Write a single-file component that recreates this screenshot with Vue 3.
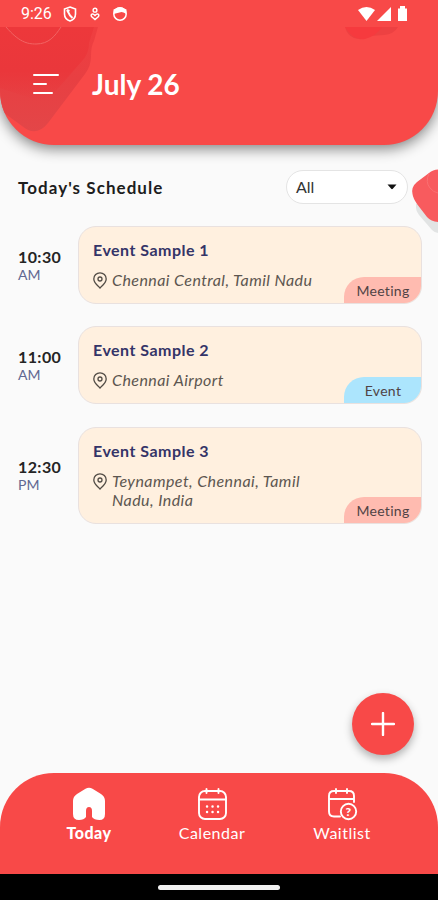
<script setup>
const events = [
  { time: '10:30', half: 'AM', title: 'Event Sample 1', place: ['Chennai Central, Tamil Nadu'], type: 'Meeting' },
  { time: '11:00', half: 'AM', title: 'Event Sample 2', place: ['Chennai Airport'], type: 'Event' },
  { time: '12:30', half: 'PM', title: 'Event Sample 3', place: ['Teynampet, Chennai, Tamil', 'Nadu, India'], type: 'Meeting' },
]
</script>

<template>
  <div class="screen">
    <header class="header">
      <svg class="header-art" width="438" height="145" viewBox="0 0 438 145">
        <defs>
          <linearGradient id="shade" x1="0" y1="0" x2="0" y2="1">
            <stop offset="0" stop-color="#f03e40" />
            <stop offset="0.5" stop-color="#e83f42" />
            <stop offset="1" stop-color="#e34648" />
          </linearGradient>
          <linearGradient id="fade" x1="0" y1="0" x2="0" y2="1">
            <stop offset="0" stop-color="#ed383b" />
            <stop offset="0.6" stop-color="#ea373b" />
            <stop offset="1" stop-color="#e8373b" stop-opacity="0" />
          </linearGradient>
        </defs>
        <path d="M0 27H98L94 41Q91 46 91 57Q91 66 85 74L48 123Q36 138 22 126L0 110Z" fill="url(#shade)" />
        <path d="M0 27H94L89 43Q89 54 82 61L54 93Q45 103 30 98L0 88Z" fill="url(#fade)" />
        <path d="M6 27C19 42 27 44 36 44C49 44 55 36 61 27" fill="none" stroke="#f26463" stroke-width="1" />
        <path d="M345 27H398Q394 34 384 35L370 36Q363 41 354 38Q347 35 345 27Z" fill="#ed4142" />
        <path d="M345 27H382Q376 36 365 39Q353 41 345 27Z" fill="#f63a3e" />
      </svg>
      <div class="status">
        <span class="clock">9:26</span>
        <svg class="shield" width="14" height="16" viewBox="0 0 14 16" fill="none" stroke="#fff" stroke-width="1.6">
          <path d="M7 1L12.500 3V8C12.500 11.500 10 14 7 15C4 14 1.500 11.500 1.500 8V3Z" />
          <path d="M4 4L7 9.500L9.500 12M4 4L6.500 5" stroke-width="2" />
        </svg>
        <svg class="person" width="10" height="14" viewBox="0 0 10 14" fill="none" stroke="#fff" stroke-width="1.400">
          <circle cx="5" cy="3.200" r="1.900" />
          <path d="M5 8.500C2.500 5.500 0.500 7.500 1.500 9.500L5 12.500L8.500 9.500C9.500 7.500 7.500 5.500 5 8.500Z" />
        </svg>
        <svg class="face" width="16" height="16" viewBox="0 0 16 16">
          <circle cx="8" cy="8" r="6.200" fill="none" stroke="#fff" stroke-width="1.500" />
          <path d="M1.500 8V3.500L4 2.500Q8 0 12 2.500L14.500 3.500V8L11.500 6.500L9.500 6L5.500 7Z" fill="#fff" />
        </svg>
        <svg class="signals" width="51" height="16" viewBox="0 0 51 16" fill="#fff">
          <path d="M0 4Q8.500-2 17 4L8.500 15Z" />
          <path d="M33 1V15H19Z" />
          <path d="M40 2.500H42V0H47V2.500H49V15H40Z" />
        </svg>
      </div>
      <div class="title-row">
        <svg class="menu" width="28" height="22" viewBox="0 0 28 22" fill="none" stroke="#fff" stroke-width="2" stroke-linecap="round">
          <path d="M2 2H26M2 11H14M2 20H20" />
        </svg>
        <h1>July 26</h1>
      </div>
    </header>

    <main class="main">
      <svg class="side-art" width="28" height="74" viewBox="0 0 28 74">
        <path d="M6 40V44Q6 47 9 51L22 66Q25 69 28 69V40Z" fill="#e2e4e4" />
        <path d="M28 5.500Q23 5.500 19 9L7 18Q1 23 2.500 30Q3 34 7 40L17 53Q21 57.500 28 58Z" fill="#f85b5e" />
        <path d="M19 9.500Q15 18 20 24Q23 28 28 29" fill="none" stroke="#fa7072" stroke-width="1" />
      </svg>
      <div class="section-head">
        <h2>Today's Schedule</h2>
        <div class="select">
          <span>All</span>
          <svg width="10" height="6" viewBox="0 0 10 6"><path d="M0.500 0.500H9.500L5.800 4.800Q5 5.600 4.200 4.800Z" fill="#111" /></svg>
        </div>
      </div>
      <section class="list">
        <article v-for="event in events" :key="event.time" class="row">
          <div class="time">
            <strong>{{ event.time }}</strong>
            <span>{{ event.half }}</span>
          </div>
          <div class="card">
            <h3>{{ event.title }}</h3>
            <div class="place">
              <svg width="14" height="17" viewBox="0 0 14 17" fill="none" stroke="#514b45" stroke-width="1.300">
                <path d="M7 16C5.500 14.200 0.800 11 0.800 6.900A6.200 6.100 0 0 1 13.200 6.900C13.200 11 8.500 14.200 7 16Z" />
                <circle cx="7" cy="7" r="2" />
              </svg>
              <p><span v-for="line in event.place" :key="line">{{ line }}</span></p>
            </div>
            <span class="tag" :class="event.type.toLowerCase()">{{ event.type }}</span>
          </div>
        </article>
      </section>
      <button class="fab" aria-label="Add">
        <svg width="24" height="24" viewBox="0 0 24 24" stroke="#fff" stroke-width="2.400" stroke-linecap="round"><path d="M12 1V23M1 12H23" /></svg>
      </button>
    </main>

    <nav class="nav">
      <div class="tab active">
        <svg width="34" height="34" viewBox="0 0 34 34">
          <path d="M13.500 1.800Q17 -0.500 20.500 1.800L29 7Q33 9.500 33 14V27Q33 33 27.500 33Q22 33 20 30V24Q20 20 17 20Q14 20 14 24V30Q12 33 7 33Q1 33 1 27V14Q1 9.500 5 7Z" fill="#fff" />
        </svg>
        <span>Today</span>
      </div>
      <div class="tab">
        <svg width="32" height="34" viewBox="0 0 32 34" fill="none" stroke="#fff" stroke-width="1.900" stroke-linecap="round">
          <rect x="3" y="4" width="27" height="28" rx="6" />
          <path d="M3 12.500H30M10.500 2V6M22.500 2V6" />
          <path d="M11 19.500H11.100M16.500 19.500H16.600M22 19.500H22.100M11 25H11.100M16.500 25H16.600M22 25H22.100" stroke-width="2.400" />
        </svg>
        <span>Calendar</span>
      </div>
      <div class="tab">
        <svg width="32" height="34" viewBox="0 0 32 34" fill="none" stroke="#fff" stroke-width="1.900" stroke-linecap="round">
          <path d="M14 29.500H8Q3 29.500 3 24.500V9Q3 4 8 4H23Q28 4 28 9V15M3 12H28M10 2V6M21 2V6" />
          <circle cx="22.500" cy="24.500" r="7.700" />
          <text x="22.500" y="28.700" text-anchor="middle" font-family="Lato, sans-serif" font-size="12" font-weight="900" fill="#fff" stroke="none">?</text>
        </svg>
        <span>Waitlist</span>
      </div>
    </nav>
    <div class="system-bar"><i></i></div>
  </div>
</template>

<style>
body {
  margin: 0;
}
</style>

<style scoped>
.screen {
  width: 438px;
  height: 900px;
  display: flex;
  flex-direction: column;
  overflow: hidden;
  background: #fafafa;
  color: #222;
  font-family: Lato, "Open Sans", sans-serif;
}
h1, h2, h3, p {
  margin: 0;
}
svg {
  display: block;
  flex: none;
}
.header {
  position: relative;
  flex: none;
  height: 145px;
  border-radius: 0 0 54px 54px;
  background: #f84948;
  box-shadow: 0 4px 14px rgba(0, 0, 0, 0.48);
}
.header-art {
  position: absolute;
  inset: 0;
  border-radius: 0 0 54px 54px;
}
.status {
  position: relative;
  display: flex;
  align-items: center;
  height: 28px;
  padding: 0 29px 0 21px;
  color: #fff;
}
.clock {
  width: 42px;
  font: 16px/20px Roboto, sans-serif;
}
.person {
  margin-left: 13px;
}
.face {
  margin-left: 12px;
}
.signals {
  margin-left: auto;
}
.title-row {
  position: relative;
  display: flex;
  align-items: center;
  height: 48px;
  margin-top: 32px;
  padding-left: 32px;
  gap: 32px;
}
h1 {
  color: #fff;
  font-size: 28px;
  font-weight: 700;
  line-height: 36px;
}
.main {
  position: relative;
  flex: 1;
}
.side-art {
  position: absolute;
  right: 0;
  top: 19px;
}
.section-head {
  display: flex;
  align-items: center;
  justify-content: space-between;
  padding: 25px 30px 0 18px;
}
h2 {
  color: #1d1d1d;
  font-size: 17px;
  font-weight: 700;
  letter-spacing: 1.05px;
}
.select {
  box-sizing: border-box;
  display: flex;
  align-items: center;
  justify-content: space-between;
  width: 122px;
  height: 34px;
  padding: 0 10px 0 9px;
  border: 1px solid #e4e4e4;
  border-radius: 17px;
  background: #fff;
  color: #333;
  font-size: 16px;
}
.select span {
  margin-top: -2px;
}
.list {
  display: flex;
  flex-direction: column;
  gap: 22.3px;
  padding: 22px 16px 0 18px;
}
.row {
  display: flex;
  align-items: center;
}
.time {
  display: flex;
  flex-direction: column;
  width: 60px;
}
.time strong {
  color: #242424;
  font-size: 16px;
  font-weight: 700;
  line-height: 18px;
  letter-spacing: 0.4px;
}
.time span {
  color: #616891;
  font-size: 14px;
  line-height: 17px;
}
.card {
  position: relative;
  box-sizing: border-box;
  flex: 1;
  padding: 13px 14px 14px;
  border: 1px solid #e9e1df;
  border-radius: 18px;
  background: #fff0df;
  overflow: hidden;
}
h3 {
  color: #343468;
  font-size: 16px;
  font-weight: 700;
  line-height: 20px;
  letter-spacing: 0.48px;
}
.place {
  display: flex;
  gap: 5px;
  margin-top: 10px;
}
.place svg {
  margin-top: 2px;
}
.place p {
  display: flex;
  flex-direction: column;
  color: #5c5650;
  font-size: 16px;
  font-style: italic;
  line-height: 19px;
  letter-spacing: 0.43px;
}
.tag {
  position: absolute;
  right: -1px;
  bottom: -1px;
  box-sizing: border-box;
  width: 78px;
  height: 27px;
  border-radius: 20px 0 10px 0;
  color: #504345;
  font-size: 14px;
  line-height: 28px;
  letter-spacing: 0.3px;
  text-align: center;
}
.meeting {
  background: #ffbbb0;
}
.event {
  background: #ace5fd;
}
.fab {
  position: absolute;
  right: 24px;
  bottom: 18px;
  display: grid;
  place-items: center;
  width: 62px;
  height: 62px;
  padding: 0;
  border: 0;
  border-radius: 50%;
  background: #f84948;
  box-shadow: 0 4px 8px rgba(0, 0, 0, 0.3);
}
.nav {
  box-sizing: border-box;
  display: grid;
  grid-template-columns: 90px 90px 90px;
  column-gap: 33px;
  flex: none;
  height: 101px;
  padding: 14px 0 0 44px;
  border-radius: 54px 54px 0 0;
  background: #f84948;
  color: #fff;
}
.tab {
  display: flex;
  flex-direction: column;
  align-items: center;
  font-size: 16px;
  line-height: 22px;
  letter-spacing: 0.5px;
}
.tab:last-child {
  margin: 0 -7px 0 7px;
}
.tab span {
  margin-top: 1px;
}
.active {
  font-weight: 900;
}
.system-bar {
  display: grid;
  place-items: center;
  flex: none;
  height: 26px;
  background: #000;
}
.system-bar i {
  width: 122px;
  height: 5px;
  border-radius: 3px;
  background: #f1f1f1;
}
</style>
